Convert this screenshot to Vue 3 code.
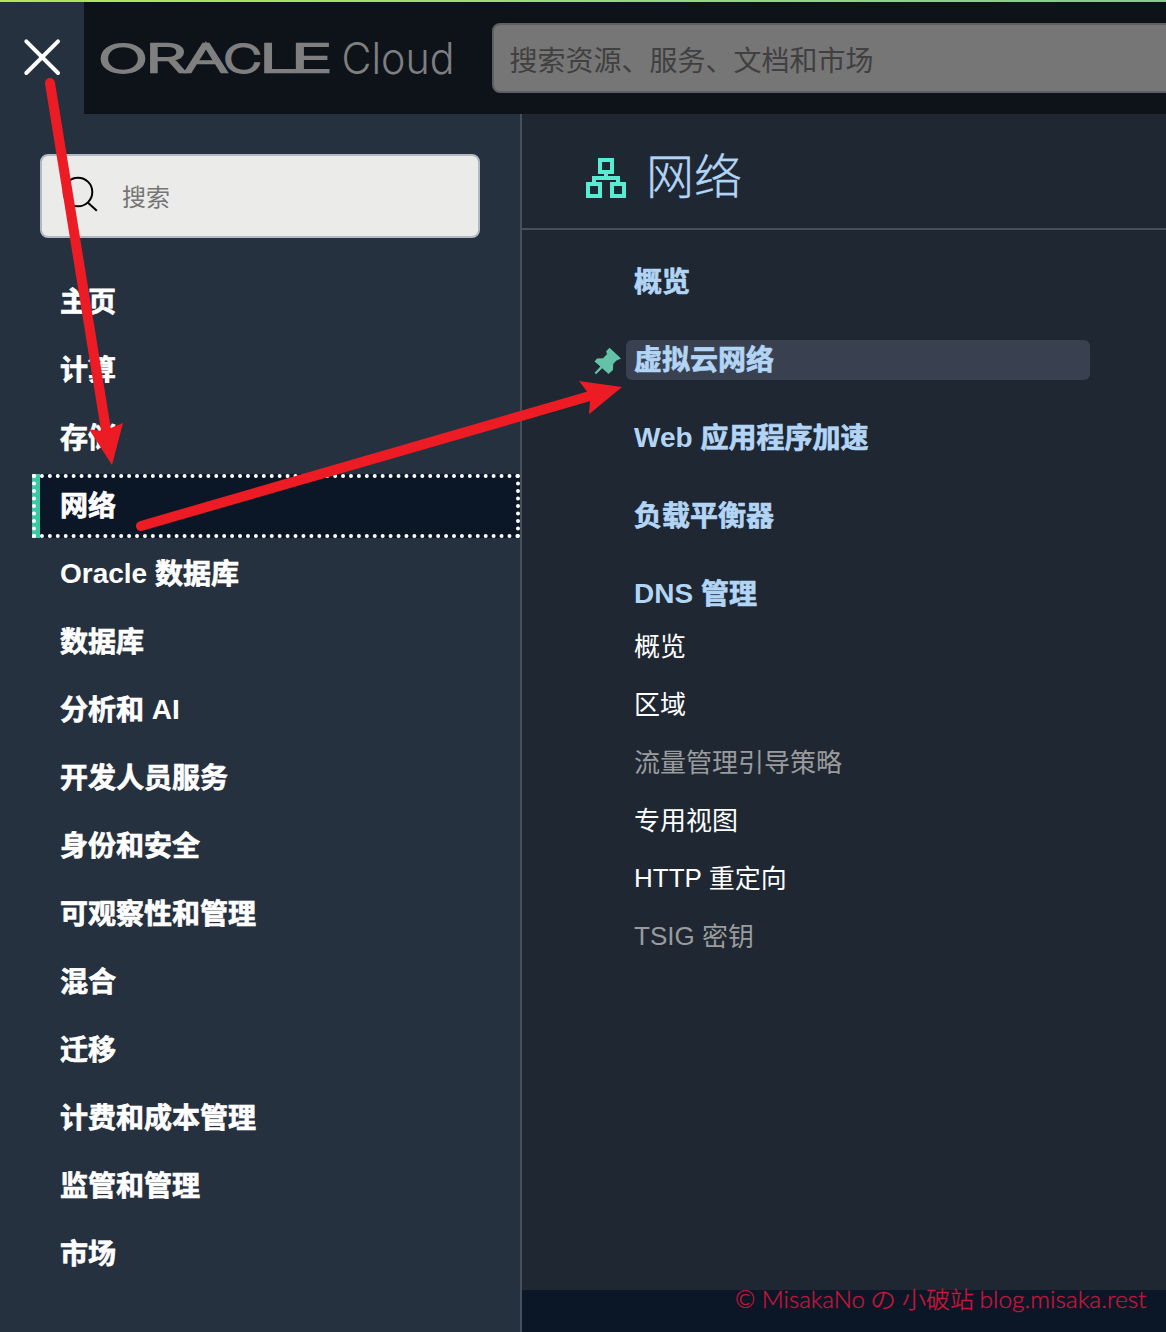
<script setup>
const menu = ['主页', '计算', '存储', '网络', 'Oracle 数据库', '数据库', '分析和 AI', '开发人员服务', '身份和安全', '可观察性和管理', '混合', '迁移', '计费和成本管理', '监管和管理', '市场']
const active = '网络'
const groups = ['概览', '虚拟云网络', 'Web 应用程序加速', '负载平衡器', 'DNS 管理']
const pinned = '虚拟云网络'
const links = [
  { label: '概览' },
  { label: '区域' },
  { label: '流量管理引导策略', muted: true },
  { label: '专用视图' },
  { label: 'HTTP 重定向' },
  { label: 'TSIG 密钥', muted: true },
]
const wordmark = [
  { c: 'O', x: 98.5, w: 49 },
  { c: 'R', x: 145.5, w: 41 },
  { c: 'A', x: 184.5, w: 43 },
  { c: 'C', x: 223.5, w: 38 },
  { c: 'L', x: 259.5, w: 38 },
  { c: 'E', x: 291, w: 41 },
]
// Splits a label into Latin and Han runs, so that each can sit on its own baseline.
const runs = (label) => label.match(/[\u4e00-\u9fff]+|[^\u4e00-\u9fff]+/g).map((text) => ({ text, han: /[\u4e00-\u9fff]/.test(text) }))
</script>

<template>
  <div class="page">
    <div class="progress"></div>
    <header class="topbar">
      <button class="close" aria-label="关闭">
        <svg width="84" height="112" viewBox="0 2 84 112"><path d="M26.3 41.3 58 73M58 41.3 26.3 73" fill="none" stroke="#fff" stroke-width="4" stroke-linecap="round" /></svg>
      </button>
      <svg class="brand" width="408" height="112" viewBox="84 2 408 112">
        <text v-for="l in wordmark" :key="l.c" class="oracle" :x="l.x" y="72.4" :textLength="l.w" lengthAdjust="spacingAndGlyphs">{{ l.c }}</text>
        <text class="cloud" x="341.5" y="74" textLength="113" lengthAdjust="spacingAndGlyphs">Cloud</text>
      </svg>
      <div class="global-search">搜索资源、服务、文档和市场</div>
    </header>

    <div class="body">
      <aside class="sidebar">
        <div class="search">
          <svg width="36" height="40" viewBox="62 174 36 40"><g fill="none" stroke="#000" stroke-width="2"><circle cx="78" cy="192" r="14.3" /><path d="m87.8 202.5 9 8.3" /></g></svg>
          <span>搜索</span>
        </div>
        <nav class="menu">
          <a v-for="item in menu" :key="item" :class="{ active: item === active }"><span v-for="r in runs(item)" :key="r.text" :class="{ han: r.han }">{{ r.text }}</span></a>
        </nav>
      </aside>

      <main class="panel">
        <div class="heading">
          <svg width="40" height="40" viewBox="0 0 40 40"><g fill="none" stroke="#5aebd3" stroke-width="4"><path d="M14 2h12v12H14zM2 26h12v12H2zM26 26h12v12H26zM20 14v6M8 26v-6h24v6" /></g></svg>
          <h1>网络</h1>
        </div>
        <div class="groups">
          <div v-for="g in groups" :key="g" class="group" :class="{ pinned: g === pinned }">
            <svg v-if="g === pinned" class="pin" width="28" height="28" viewBox="594 347 28 28"><path fill="#64c2a9" d="M609.5 347.8 621 358.6 616.2 360.8 613.2 364 613 370 608.5 374 602.2 368.2 596 374.2 594.6 372.8 600.4 366.4 594.5 361.5 597 358.6 603 358.3 607 354.2 606.2 351.2Z" /></svg>
            <span v-for="r in runs(g)" :key="r.text" :class="{ han: r.han }">{{ r.text }}</span>
          </div>
          <div class="links">
            <a v-for="l in links" :key="l.label" :class="{ muted: l.muted }"><span v-for="r in runs(l.label)" :key="r.text" :class="{ latin: !r.han }">{{ r.text }}</span></a>
          </div>
        </div>
        <footer></footer>
      </main>
    </div>

    <svg class="overlay" width="1166" height="1332" viewBox="0 0 1166 1332">
      <g fill="none" stroke="#ed1c24" stroke-width="10" stroke-linecap="round">
        <path d="M50 83 106 430" /><path d="M141 526 589 396.3" />
      </g>
      <g fill="#ed1c24">
        <path d="M112 465 89 429.3 101.5 431 110.7 428 123 423Z" />
        <path d="M622 387 579 381 587.2 391.7 590 401.3 589 414.3Z" />
      </g>
      <g class="watermark">
        <text x="735" y="1308" textLength="130" lengthAdjust="spacingAndGlyphs">© MisakaNo</text>
        <text x="870" y="1308" textLength="26" lengthAdjust="spacingAndGlyphs">の</text>
        <text x="902" y="1308" textLength="72" lengthAdjust="spacingAndGlyphs">小破站</text>
        <text x="979.5" y="1308" textLength="167" lengthAdjust="spacingAndGlyphs">blog.misaka.rest</text>
      </g>
    </svg>
  </div>
</template>

<style>
body { margin: 0; }
</style>
<style scoped>
* { box-sizing: border-box; }
.page { position: relative; width: 1166px; height: 1332px; overflow: hidden; display: flex; flex-direction: column; background: #1e2732; font-family: "Liberation Sans", "Noto Sans CJK SC", sans-serif; }
.progress { height: 2px; flex: none; background: linear-gradient(90deg, #b5e655, #84cb95); }
.topbar { height: 112px; flex: none; display: flex; background: #0e131a; }
.close { width: 84px; height: 112px; padding: 0; border: 0; background: #263140; }
.close svg, .brand { display: block; flex: none; }
.oracle { font: 200 37.5px Inter, sans-serif; fill: #7f7f7f; stroke: #7f7f7f; stroke-width: 2.6px; }
.cloud { font: 300 43px Inter, sans-serif; fill: #7f7f7f; }
.global-search { flex: none; width: 700px; height: 70px; margin-top: 21px; padding-left: 15.5px; border: 2px solid #5c6064; border-radius: 8px; background: #767676; color: #404040; font-size: 28px; line-height: 74px; }
.body { flex: 1; display: flex; min-height: 0; }
.sidebar { width: 522px; flex: none; border-right: 2px solid #46505c; background: #263140; }
.search { display: flex; align-items: center; width: 440px; height: 84px; margin: 40px 0 0 40px; padding: 0 20px 4px; border: 2px solid #b0b9c3; border-radius: 8px; background: #ebebe9; color: #757575; font-size: 24px; }
.search span { margin-left: 24px; line-height: 36px; padding-top: 8px; }
.menu { display: flex; flex-direction: column; gap: 4px; margin: 32px 0 0 32px; }
.menu a { height: 64px; padding-left: 28px; color: #fff; font-weight: 700; font-size: 28px; line-height: 64px; white-space: pre; }
.menu .active { padding-left: 24px; border: 4px dotted #fff; line-height: 56px; background: linear-gradient(90deg, #3bc8a5 8px, #0b1726 8px) border-box; }
.han { position: relative; top: 1px; -webkit-text-stroke: 0.7px currentColor; }
.latin { position: relative; top: -1px; }
.panel { flex: 1; display: flex; flex-direction: column; }
.heading { display: flex; align-items: center; height: 116px; padding: 14px 0 0 64px; border-bottom: 2px solid #46505c; }
h1 { margin: 0 0 0 20px; color: #b3d5f5; font-size: 48px; font-weight: 300; line-height: 72px; -webkit-text-stroke: 0.4px currentColor; }
.groups { flex: 1; padding: 32px 0 0 104px; }
.group { position: relative; width: 464px; height: 40px; margin-bottom: 38px; padding-left: 8px; border-radius: 6px; color: #b3d5f5; font-weight: 700; font-size: 28px; line-height: 40px; white-space: pre; }
.group.pinned { background: #394150; }
.pin { position: absolute; left: -32px; top: 7px; }
.links { display: flex; flex-direction: column; margin-top: -34px; padding-left: 8px; }
.links a { height: 58px; line-height: 58px; font-size: 26px; color: #fff; white-space: pre; }
.links .muted { color: #9a9b9c; }
footer { height: 42px; background: #0b1726; }
.overlay { position: absolute; inset: 0; pointer-events: none; }
.watermark { font: 300 23px Lato, "Noto Sans CJK SC", sans-serif; fill: #c8163c; stroke: #c8163c; stroke-width: 0.3px; }
</style>
